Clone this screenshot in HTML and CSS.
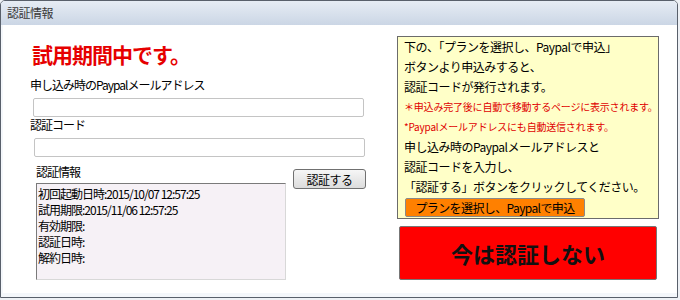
FILE: index.html
```
<!DOCTYPE html>
<html>
<head>
  <link rel="stylesheet" href="styles.css">
</head>
<body>
  <div class="window">
    <div class="title-bar">認証情報</div>

    <div class="content">
      <div class="left">
        <div class="trial-title">試用期間中です。</div>

        <div class="field-label">申し込み時のPaypalメールアドレス</div>
        <input class="text-input" type="text">

        <div class="field-label">認証コード</div>
        <input class="text-input code-input" type="text">

        <div class="info-row">
          <div class="info-col">
            <div class="field-label">認証情報</div>
            <div class="info-box">
              <div>初回起動日時:2015/10/07 12:57:25</div>
              <div>試用期限:2015/11/06 12:57:25</div>
              <div>有効期限:</div>
              <div>認証日時:</div>
              <div>解約日時:</div>
            </div>
          </div>
          <button class="auth-button">認証する</button>
        </div>
      </div>

      <div class="right">
        <div class="notice">
          <div class="notice-line">下の、「プランを選択し、Paypalで申込」</div>
          <div class="notice-line">ボタンより申込みすると、</div>
          <div class="notice-line">認証コードが発行されます。</div>
          <div class="notice-line note">＊申込み完了後に自動で移動するページに表示されます。</div>
          <div class="notice-line note">*Paypalメールアドレスにも自動送信されます。</div>
          <div class="notice-line">申し込み時のPaypalメールアドレスと</div>
          <div class="notice-line">認証コードを入力し、</div>
          <div class="notice-line">「認証する」ボタンをクリックしてください。</div>
          <button class="plan-button">プランを選択し、Paypalで申込</button>
        </div>
        <button class="skip-button">今は認証しない</button>
      </div>
    </div>
  </div>
</body>
</html>
```

FILE: styles.css
```
body {
  margin: 0;
  background-color: #eef1f5;
  font-family: "Noto Sans CJK JP", "Noto Sans", sans-serif;
  font-size: 12px;
  color: #000;
}

.window {
  width: 678px;
  height: 298px;
  box-sizing: border-box;
  border: 1px solid #59606b;
  border-radius: 5px 5px 0 0;
  background-color: #fff;
  overflow: hidden;
}

.title-bar {
  height: 24px;
  line-height: 24px;
  padding-left: 6px;
  background: linear-gradient(#e6ecf4, #cbd6e5);
  color: #3a3a3a;
  font-size: 12px;
  letter-spacing: -0.5px;
}

.content {
  display: flex;
  justify-content: space-between;
  height: 272px;
  padding: 0 18px 0 29px;
  border-left: 2px solid #f4f7fb;
  border-bottom: 4px solid #f4f7fb;
  box-sizing: border-box;
}

.left {
  width: 340px;
  margin-left: -2px;
}

.trial-title {
  margin-top: 16px;
  margin-left: 2px;
  line-height: 26px;
  font-size: 21px;
  font-weight: bold;
  color: #e60000;
  letter-spacing: -1px;
}

.field-label {
  margin-top: 10px;
  line-height: 16px;
  letter-spacing: -1px;
}

.text-input {
  display: block;
  width: 331px;
  height: 19px;
  box-sizing: border-box;
  margin: 5px 0 0 3px;
  border: 1px solid #c4c4c4;
  border-radius: 2px;
  background-color: #fff;
}

.code-input {
  margin-left: 4px;
}

.text-input + .field-label {
  margin-top: 0;
}

.info-row {
  display: flex;
  align-items: flex-start;
}

.info-col {
  margin-left: 6px;
}

.info-col .field-label {
  margin-top: 7px;
}

.info-box {
  width: 250px;
  height: 97px;
  box-sizing: border-box;
  margin-top: 3px;
  padding: 2px 0 0 1px;
  border: 1px solid #7a7a7a;
  border-right-color: #d8d8d8;
  border-bottom-color: #d8d8d8;
  background-color: #f6f1f6;
  line-height: 16px;
  letter-spacing: -1px;
}

.auth-button {
  width: 73px;
  height: 20px;
  margin: 12px 0 0 7px;
  padding: 0;
  border: 1px solid #707070;
  border-radius: 3px;
  background: linear-gradient(#f6f6f6, #dcdcdc);
  font-family: inherit;
  font-size: 12px;
  color: #000;
  letter-spacing: -0.5px;
}

.right {
  width: 262px;
  padding-top: 11px;
}

.notice {
  height: 183px;
  box-sizing: border-box;
  padding: 0 0 0 6px;
  border: 1px solid #6b6b6b;
  background-color: #ffffc8;
}

.notice-line {
  line-height: 20px;
  letter-spacing: -0.5px;
  white-space: nowrap;
}

.note {
  font-size: 10px;
  color: #e00000;
  letter-spacing: -0.2px;
}

.plan-button {
  display: block;
  width: 180px;
  height: 19px;
  margin: 1px 0 0 1px;
  padding: 0;
  border: 1px solid #8a8a8a;
  border-radius: 2px;
  background-color: #ff8000;
  font-family: inherit;
  font-size: 12px;
  line-height: 16px;
  color: #000;
  letter-spacing: -0.6px;
}

.skip-button {
  display: block;
  width: 258px;
  height: 54px;
  margin: 7px 0 0 2px;
  padding: 0;
  border: 1px solid #777;
  border-radius: 2px;
  background-color: #ff0000;
  font-family: inherit;
  font-size: 22px;
  font-weight: bold;
  color: #111;
}
```
